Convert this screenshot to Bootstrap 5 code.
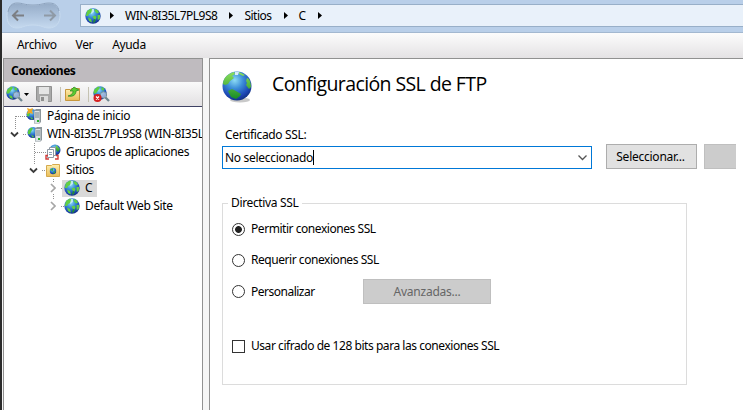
<!DOCTYPE html>
<html lang="es">
<head>
<meta charset="utf-8">
<meta name="viewport" content="width=device-width, initial-scale=1">
<title>Configuración SSL de FTP</title>
<link href="https://cdn.jsdelivr.net/npm/bootstrap@5.3.0/dist/css/bootstrap.min.css" rel="stylesheet">
<style>
body{font:12px/18px "Noto Sans","Open Sans",sans-serif;color:#000;letter-spacing:-.35px;white-space:nowrap}
svg{display:block;flex:none}
.app{height:410px;border-left:2px solid #2b2b2b;background:#f5f5f5}
.titlebar{height:33px;background:#b9cfe9;border-bottom:1px solid #a3b8d0;padding:0 0 0 4px}
.address{height:23px;margin:4px 0 0 18px;background:#e9f1fa;border:1px solid #98afc8;border-right:0;padding-left:4px;letter-spacing:-.5px}
.crumb-name{margin:0 12px 0 11px}
.crumb-first{margin-left:9px}
.menus{height:25px;background:linear-gradient(#fcfcfc,#e4e2e4);padding-left:15px;gap:19px;line-height:24px}
.side{width:200px;margin-left:1px;border:1px solid #919191;border-bottom:0;background:#fff}
.side-title{height:23px;background:#bfbbbf;font-weight:700;line-height:24px;padding-left:7px;letter-spacing:-.45px}
.tools{height:25px;background:linear-gradient(#fafafa,#e2e0e2);border-bottom:1px solid #3e4164;padding-left:2px}
.tool-caret{margin:0 7px 0 1px}
.sep{width:1px;height:15px;background:#c5c2b2}
.tree-row{height:18px}
.lvl-home{padding-left:22px;gap:5px}
.lvl-host{padding-left:6px;gap:4px}
.lvl-child{padding-left:41px;gap:5px}
.lvl-sites{padding-left:25px;gap:8px}
.folder-label{margin-left:-2px}
.lvl-site{padding-left:46px;gap:6px}
.pick{background:#d9d9d9;height:17px}
.site{gap:5px;padding:0 5px 0 2px}
.pane{margin-left:6px;border:1px solid #919191;border-width:1px 0 0 1px;background:#fff;padding-left:12px}
.head-row{padding-top:12px;gap:20px;height:66px}
.heading{font:400 19.500px/25px "Open Sans","Noto Sans",sans-serif;letter-spacing:-.6px}
.cert-label{height:19px;padding-left:3px;line-height:19px}
.combo{width:370px;height:23px;border:1px solid #0078d7;padding:0 4px 0 2px;letter-spacing:-.3px}
.caret{width:1px;height:15px;background:#000}
.push{height:25px;border:1px solid #adadad;background:#e1e1e1;border-radius:0;font-size:12px;line-height:22px;padding:0;letter-spacing:inherit;color:#000}
.push:disabled{opacity:1;background:#ccc;border-color:#bfbfbf;color:#666}
.select-btn{width:91px;margin-left:14px;letter-spacing:-.25px;padding-right:2px}
.extra-btn{width:32px;margin-left:7px;border-right:0}
.policy{width:465px;height:182px;border:1px solid #dcdcdc;margin-top:34px;padding-left:9px;letter-spacing:-.45px}
.policy-title{width:74px;margin:-10px 0 0 -4px;padding-left:3px;background:#fff;letter-spacing:-.35px}
.choice{gap:6px;height:18px;margin-bottom:13px}
.choice input{appearance:none;width:13px;height:13px;border:1px solid #333;background:#fff;margin:0;flex:none}
.choice input[type=radio]{border-radius:50%}
.choice input[type=radio]:checked{background:radial-gradient(circle,#222 3px,#fff 3.8px)}
.first-choice{margin-top:8px}
.custom-row{height:25px;margin:-3px 0 33px}
.custom-row .choice{width:131px;margin:0;letter-spacing:-.5px}
.adv-btn{width:128px;letter-spacing:-.25px;line-height:24px}
</style>
</head>
<body class="overflow-hidden">
<svg width="0" height="0" class="position-absolute" aria-hidden="true">
<defs>
<radialGradient id="sea" cx=".42" cy=".3" r=".72"><stop offset="0" stop-color="#8ddcf5"/><stop offset=".4" stop-color="#3c8ed8"/><stop offset=".8" stop-color="#1c45b4"/><stop offset="1" stop-color="#12307c"/></radialGradient>
<linearGradient id="land" x2="0" y2="1"><stop stop-color="#8de05c"/><stop offset="1" stop-color="#178b25"/></linearGradient>
<linearGradient id="paper" x2="0" y2="1"><stop stop-color="#fff0b0"/><stop offset="1" stop-color="#e9bd58"/></linearGradient>
<linearGradient id="well" x2="0" y2="1"><stop stop-color="#95abc6"/><stop offset=".5" stop-color="#acc2dc"/><stop offset="1" stop-color="#c5d9ef"/></linearGradient>
<symbol id="globe" viewBox="0 0 30 32"><ellipse cx="18" cy="29" rx="10" ry="2.500" fill="#777" opacity=".4"/><circle cx="15" cy="15" r="14.500" fill="url(#sea)"/><path d="M1 12C2 6 6 3 12 1l1 2-3 2 2 2-4 3-2 3-3 1-2-1zM17 1l6 3-2 1-4-2zM25 7c2 0 4 4 4 9l-2 2-3-4 1-2-1-2zM6 20l4-2 4 2 5 3-1 2-4 3-5-2z" fill="url(#land)"/><path d="M13 1l4 0-1 3-3 0z" fill="#f3fbff" opacity=".85"/></symbol>
<symbol id="globe-small" viewBox="0 0 16 16"><circle cx="8" cy="8" r="7.700" fill="url(#sea)"/><path d="M2 3l4-2.500L8 2 6 5 4 6 3 8 .8 8zM9.500 1l3 1 1.500 2.500-2 1-2-2zM7.500 8.500l3-1 1 2-1 2-2-1zM3 9.500l3 1.500 1 3.500-3-1.500zM12.500 7l2.700 0-.5 4-2 1z" fill="#63cf43"/><path d="M7 1l2 0 0 3-3 2z" fill="#d6f4fd" opacity=".8"/><path d="M9 11l2 1-2 3-1-1z" fill="#218e32"/></symbol>
<symbol id="server" viewBox="0 0 16 16"><circle cx="6" cy="6.500" r="5.500" fill="url(#sea)"/><path d="M1 5l3-3.500 2 1-2 3-1 3-2-.5zM4 9l3 1-1 2z" fill="#55c93e"/><path d="M8 2.500L10 1h5v13l-1.500 1.500H8z" fill="#8c969b"/><path d="M8.500 3h5v12h-5z" fill="#dce2e5"/><path d="M9 5h4M9 7h4M9 9h4" stroke="#77858c"/><path d="M11 12h2v2h-2z" fill="#29b229"/></symbol>
<symbol id="search-globe" viewBox="0 0 17 16"><circle cx="7" cy="7" r="6.700" fill="url(#sea)"/><path d="M1 4l4-3.500 2 1-2 3-2 3-2.500 0zM8.500.8l3 2-1 2-2-1zM3 9l3 1 1 3-3-1z" fill="#60ce3e"/><circle cx="10.500" cy="9" r="3.200" fill="#d5e5ed" fill-opacity=".65" stroke="#75929c"/><path d="M12.500 11.500l3.500 3.500" stroke="#6e868f" stroke-width="2.300"/></symbol>
<symbol id="open" viewBox="0 0 9 7"><path d="M1 1.500l3.500 3.500L8 1.500" fill="none" stroke="#3c3c3c" stroke-width="1.800"/></symbol>
<symbol id="closed" viewBox="0 0 6 10"><path d="M1 1l4 4-4 4" fill="none" stroke="#a6a6a6" stroke-width="1.700"/></symbol>
<symbol id="crumb" viewBox="0 0 4 7"><path d="M0 0l4 3.500L0 7z"/></symbol>
</defs>
</svg>
<div class="app d-flex flex-column">
<header class="titlebar d-flex">
<svg width="56" height="32" viewBox="6 0 56 32"><path d="M17 3c6 0 7 2 16 2s10-2 16-2c7 0 11 5 11 12.500S56 28 49 28c-6 0-7-3-16-3s-10 3-16 3C10 28 7 23 7 15.500S10 3 17 3z" fill="url(#well)" stroke="#c8dbef"/><path d="M8 12C9 6 12 3 17 3c6 0 7 2 16 2s10-2 16-2c6 0 9 3 10 8" fill="none" stroke="#8ba1bd"/><path d="M24 15.500H13M18 10.500l-5 5 5 5" fill="none" stroke="#7c7f84" stroke-width="2"/><path d="M44 15.500h11M50 10.500l5 5-5 5" fill="none" stroke="#8f9aa6" stroke-width="2"/></svg>
<nav class="address d-flex align-items-center flex-grow-1">
<svg width="16" height="16"><use href="#globe-small"/></svg>
<svg class="crumb-first" width="4" height="7"><use href="#crumb"/></svg>
<span class="crumb-name">WIN-8I35L7PL9S8</span>
<svg width="4" height="7"><use href="#crumb"/></svg>
<span class="crumb-name">Sitios</span>
<svg width="4" height="7"><use href="#crumb"/></svg>
<span class="crumb-name">C</span>
<svg width="4" height="7"><use href="#crumb"/></svg>
</nav>
</header>
<nav class="menus d-flex"><span>Archivo</span><span>Ver</span><span>Ayuda</span></nav>
<div class="d-flex flex-grow-1">
<aside class="side flex-shrink-0 overflow-hidden">
<div class="side-title">Conexiones</div>
<div class="tools d-flex align-items-center">
<svg width="17" height="16"><use href="#search-globe"/></svg>
<svg class="tool-caret" width="5" height="3" viewBox="0 0 5 3"><path d="M0 0h5L2.500 3z"/></svg>
<svg width="16" height="16" viewBox="0 0 16 16"><path d="M.5.500h15v15H2L.5 14z" fill="#a9a9a9" stroke="#919191"/><path d="M3 1h10v7H3z" fill="#e5e5e5"/><path d="M4 10h8v6H4z" fill="#ddd"/><path d="M5 11h3v4H5z" fill="#8f8f8f"/></svg>
<span class="sep ms-2 me-1"></span>
<svg width="15" height="16" viewBox="0 0 15 16"><path d="M.5 3.500h5l1-1h8v12H.5z" fill="url(#paper)" stroke="#c7973d"/><path d="M3 10c4-1 5-3 5-5H5l4-4 5 3-3 1c0 4-3 6-8 5z" fill="#5ccb31" stroke="#26831f" stroke-width=".7"/></svg>
<span class="sep ms-2 me-1"></span>
<svg width="17" height="16"><use href="#search-globe"/><circle cx="4.500" cy="12" r="4" fill="#d52020"/><path d="M3 10.500l3 3m0-3l-3 3" stroke="#fff" stroke-width="1.300"/></svg>
</div>
<div class="position-relative">
<svg class="position-absolute top-0 start-0" width="80" height="110" fill="none" stroke="#909090" stroke-dasharray="1 1"><path d="M11.500 9v14M12 9.500h11M19 27.500h4M30.500 36v22M31 45.500h11M38 63.500h4M49.500 72v3M49.500 87v6M57 81.500h4M57 99.500h4"/></svg>
<div class="tree-row lvl-home d-flex align-items-center position-relative"><svg width="16" height="16"><use href="#server"/><path d="M1 0l3 1 3-1-1 3 1 3-3-1-3 1 1-3z" fill="#f0a623"/></svg><span>Página de inicio</span></div>
<div class="tree-row lvl-host d-flex align-items-center position-relative"><svg width="9" height="7"><use href="#open"/></svg><svg class="ms-1" width="16" height="16"><use href="#server"/></svg><span class="overflow-hidden">WIN-8I35L7PL9S8 (WIN-8I35L7</span></div>
<div class="tree-row lvl-child d-flex align-items-center position-relative"><svg width="16" height="16" viewBox="0 0 16 16"><circle cx="10" cy="6" r="5.500" fill="url(#sea)"/><path d="M11 1l4 4-2 3-3-3z" fill="url(#land)"/><path d="M4.500 3.500h6v8h-6z" fill="#fff" stroke="#8e99a4"/><path d="M2.500 5.500h6v8h-6z" fill="#fff" stroke="#8e99a4"/><path d="M4 8.500h3M4 10.500h3" stroke="#8aa1ba"/><path d="M3 11.500H1v3.500h3M10 15h3v-3.500h-2" fill="none" stroke="#d43b38" stroke-width="1.400"/></svg><span>Grupos de aplicaciones</span></div>
<div class="tree-row lvl-sites d-flex align-items-center position-relative"><svg width="9" height="7"><use href="#open"/></svg><svg width="14" height="14" viewBox="0 0 14 14"><path d="M.5 2.500h5l1-1h7v12H.5z" fill="url(#paper)" stroke="#d5a94d"/><circle cx="7" cy="8" r="3.200" fill="url(#sea)"/><path d="M4 7l3-2v3zM7 9l3-1-2 3z" fill="#37ae3b"/></svg><span class="folder-label">Sitios</span></div>
<div class="tree-row lvl-site d-flex align-items-center position-relative"><svg width="6" height="10"><use href="#closed"/></svg><div class="pick site d-flex align-items-center"><svg width="16" height="16"><use href="#globe-small"/></svg><span>C</span></div></div>
<div class="tree-row lvl-site d-flex align-items-center position-relative"><svg width="6" height="10"><use href="#closed"/></svg><div class="site d-flex align-items-center"><svg width="16" height="16"><use href="#globe-small"/></svg><span>Default Web Site</span></div></div>
</div>
</aside>
<main class="pane flex-grow-1 overflow-hidden">
<div class="head-row d-flex"><svg width="30" height="32"><use href="#globe"/></svg><h1 class="heading mb-0">Configuración SSL de FTP</h1></div>
<div class="cert-label">Certificado SSL:</div>
<div class="d-flex align-items-end">
<div class="combo d-flex align-items-center"><span>No seleccionado</span><span class="caret"></span><svg class="ms-auto" width="9" height="6" viewBox="0 0 9 6"><path d="M.5.500l4 4 4-4" fill="none" stroke="#555" stroke-width="1.300"/></svg></div>
<button class="btn push select-btn">Seleccionar...</button><button class="btn push extra-btn" disabled></button>
</div>
<section class="policy">
<div class="policy-title">Directiva SSL</div>
<label class="choice first-choice d-flex align-items-center"><input type="radio" name="ssl" checked><span>Permitir conexiones SSL</span></label>
<label class="choice d-flex align-items-center"><input type="radio" name="ssl"><span>Requerir conexiones SSL</span></label>
<div class="custom-row d-flex align-items-center"><label class="choice d-flex align-items-center"><input type="radio" name="ssl"><span>Personalizar</span></label><button class="btn push adv-btn" disabled>Avanzadas...</button></div>
<label class="choice d-flex align-items-center"><input type="checkbox"><span>Usar cifrado de 128 bits para las conexiones SSL</span></label>
</section>
</main>
</div>
</div>
<script src="https://cdn.jsdelivr.net/npm/bootstrap@5.3.0/dist/js/bootstrap.bundle.min.js"></script>
</body>
</html>
